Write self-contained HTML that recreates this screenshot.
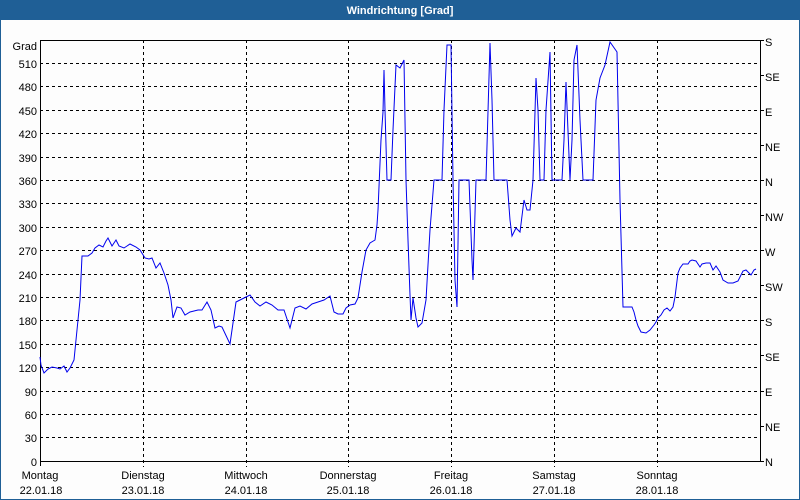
<!DOCTYPE html>
<html><head><meta charset="utf-8"><style>
html,body{margin:0;padding:0;width:800px;height:500px;overflow:hidden;background:#fdfdfd}
</style></head><body>
<svg width="800" height="500" xmlns="http://www.w3.org/2000/svg" style="display:block;font-family:'Liberation Sans',sans-serif;font-size:11px">
<rect x="0" y="0" width="800" height="500" fill="#fdfdfd"/>
<rect x="0.5" y="0.5" width="799" height="499" fill="none" stroke="#1f5f96"/>
<rect x="0" y="0" width="800" height="20" fill="#1f5f96"/>
<text x="400" y="14" fill="#fff" font-weight="bold" text-anchor="middle">Windrichtung [Grad]</text>
<g stroke="#000" stroke-dasharray="3,3" stroke-width="1">
<line x1="40" x2="760" y1="63.5" y2="63.5"/><line x1="40" x2="760" y1="86.5" y2="86.5"/><line x1="40" x2="760" y1="110.5" y2="110.5"/><line x1="40" x2="760" y1="133.5" y2="133.5"/><line x1="40" x2="760" y1="157.5" y2="157.5"/><line x1="40" x2="760" y1="180.5" y2="180.5"/><line x1="40" x2="760" y1="203.5" y2="203.5"/><line x1="40" x2="760" y1="227.5" y2="227.5"/><line x1="40" x2="760" y1="250.5" y2="250.5"/><line x1="40" x2="760" y1="274.5" y2="274.5"/><line x1="40" x2="760" y1="297.5" y2="297.5"/><line x1="40" x2="760" y1="320.5" y2="320.5"/><line x1="40" x2="760" y1="344.5" y2="344.5"/><line x1="40" x2="760" y1="367.5" y2="367.5"/><line x1="40" x2="760" y1="391.5" y2="391.5"/><line x1="40" x2="760" y1="414.5" y2="414.5"/><line x1="40" x2="760" y1="437.5" y2="437.5"/>
<line x1="143.5" x2="143.5" y1="40" y2="467"/><line x1="246.5" x2="246.5" y1="40" y2="467"/><line x1="348.5" x2="348.5" y1="40" y2="467"/><line x1="451.5" x2="451.5" y1="40" y2="467"/><line x1="554.5" x2="554.5" y1="40" y2="467"/><line x1="657.5" x2="657.5" y1="40" y2="467"/>
</g>
<g stroke="#000" fill="none">
<polyline points="40.5,466 40.5,40.5 760.5,40.5 760.5,461"/>
<line x1="40" x2="760" y1="461.5" y2="461.5"/>
<line x1="760" x2="764" y1="40.5" y2="40.5"/><line x1="760" x2="764" y1="75.5" y2="75.5"/><line x1="760" x2="764" y1="110.5" y2="110.5"/><line x1="760" x2="764" y1="145.5" y2="145.5"/><line x1="760" x2="764" y1="180.5" y2="180.5"/><line x1="760" x2="764" y1="215.5" y2="215.5"/><line x1="760" x2="764" y1="250.5" y2="250.5"/><line x1="760" x2="764" y1="285.5" y2="285.5"/><line x1="760" x2="764" y1="320.5" y2="320.5"/><line x1="760" x2="764" y1="355.5" y2="355.5"/><line x1="760" x2="764" y1="391.5" y2="391.5"/><line x1="760" x2="764" y1="426.5" y2="426.5"/><line x1="760" x2="764" y1="461.5" y2="461.5"/>
</g>
<g fill="#000" text-anchor="end">
<text x="37" y="50">Grad</text>
<text x="37" y="68">510</text><text x="37" y="91">480</text><text x="37" y="115">450</text><text x="37" y="138">420</text><text x="37" y="162">390</text><text x="37" y="185">360</text><text x="37" y="208">330</text><text x="37" y="232">300</text><text x="37" y="255">270</text><text x="37" y="279">240</text><text x="37" y="302">210</text><text x="37" y="325">180</text><text x="37" y="349">150</text><text x="37" y="372">120</text><text x="37" y="396">90</text><text x="37" y="419">60</text><text x="37" y="442">30</text><text x="37" y="466">0</text>
</g>
<g fill="#000">
<text x="765" y="46">S</text><text x="765" y="81">SE</text><text x="765" y="116">E</text><text x="765" y="151">NE</text><text x="765" y="186">N</text><text x="765" y="221">NW</text><text x="765" y="256">W</text><text x="765" y="291">SW</text><text x="765" y="326">S</text><text x="765" y="361">SE</text><text x="765" y="396">E</text><text x="765" y="431">NE</text><text x="765" y="466">N</text>
</g>
<g fill="#000" text-anchor="middle">
<text x="40" y="479">Montag</text><text x="41" y="494">22.01.18</text>
<text x="143" y="479">Dienstag</text><text x="143" y="494">23.01.18</text>
<text x="246" y="479">Mittwoch</text><text x="246" y="494">24.01.18</text>
<text x="348" y="479">Donnerstag</text><text x="348" y="494">25.01.18</text>
<text x="451" y="479">Freitag</text><text x="451" y="494">26.01.18</text>
<text x="554" y="479">Samstag</text><text x="554" y="494">27.01.18</text>
<text x="657" y="479">Sonntag</text><text x="657" y="494">28.01.18</text>
</g>
<polyline fill="none" stroke="#0000ee" stroke-width="1" points="40,357 41,365 44,373 48,369 52,367 57,368 60,369 64,366 67,372 70,368 74,360 77,330 80,300 82,256 88,256 92,253 95,248 99,245 103,247 106,241 108,238 112,246 116,240 119,246 124,248 130,244 136,247 140,250 145,258 149,259 152,258 156,268 160,263 164,273 168,285 171,300 173,318 177,307 181,308 185,315 190,312 198,310 202,310 207,302 211,310 215,328 219,326 222,327 230,344 236,302 238,301 244,298 250,295 255,302 260,306 266,302 272,305 278,310 284,310 290,328 295,308 300,306 306,309 312,304 318,302 324,300 330,296 334,312 338,314 343,314 346,308 350,305 355,304 358,298 362,272 366,250 370,243 375,240 377,225 378,210 381,140 383,112 384,70 385,110 387,180 391,180 393,130 396,65 400,68 404,60 406,180 408,240 410,295 411,320 413,298 416,318 418,327 422,323 426,300 430,230 434,180 442,180 444,110 447,45 451,45 453,180 455,280 457,307 459,180 469,180 472,260 473,280 476,180 486,180 490,43 492,100 494,180 507,180 510,220 512,236 516,228 520,232 524,200 527,210 530,210 533,180 536,78 538,110 540,180 544,180 546,110 550,52 552,180 562,180 564,140 566,82 570,180 572,140 574,60 577,45 580,120 583,180 593,180 596,100 600,78 605,65 610,42 617,52 620,200 623,307 632,307 634,312 636,320 638,326 641,332 646,333 650,330 654,325 656,322 658,318 661,315 664,310 667,308 670,311 673,307 675,297 678,273 680,268 683,264 688,264 690,261 692,260 696,261 700,267 702,264 706,263 710,263 713,270 716,266 720,272 723,280 728,283 733,283 738,281 741,275 743,271 746,270 749,273 751,275 754,270 756,269"/>
</svg>
</body></html>
